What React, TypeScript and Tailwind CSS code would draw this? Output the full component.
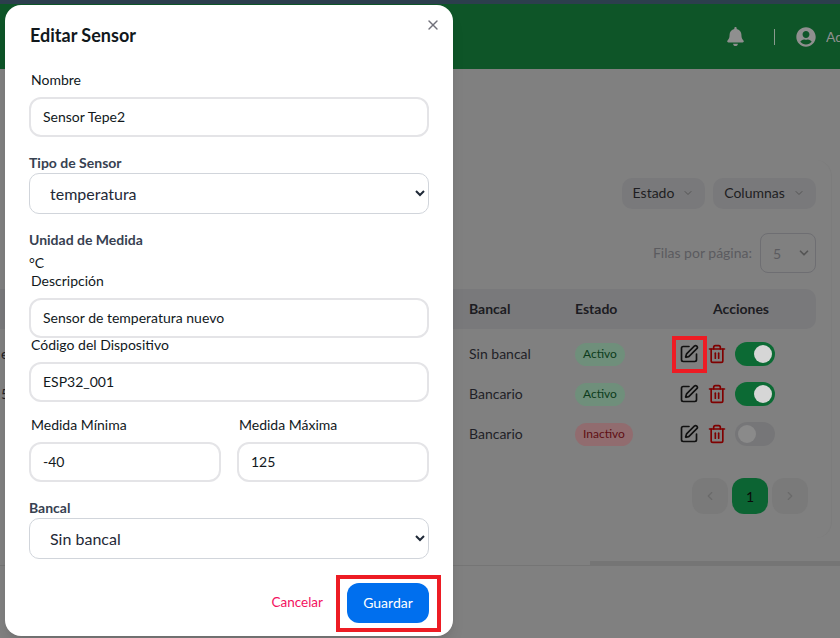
import { SquarePen, Trash2, ChevronDown, ChevronLeft, ChevronRight, X } from "lucide-react";
import { FaBell, FaUserCircle } from "react-icons/fa";

const rows = [
  { cut: "e", bancal: "Sin bancal", on: true },
  { cut: "5", bancal: "Bancario", on: true },
  { cut: "", bancal: "Bancario", on: false },
];

function TextField({ value, className = "" }: { value: string; className?: string }) {
  return (
    <input
      readOnly
      defaultValue={value}
      className={`block h-[40px] w-full rounded-[12px] border-2 border-[#e4e4e7] bg-white px-3 pb-[2px] text-[14px] text-[#11181c] outline-none ${className}`}
    />
  );
}

function NativeSelect({ value }: { value: string }) {
  return (
    <select
      defaultValue={value}
      className="block h-[41px] w-full rounded-[10px] border border-[#d1d5db] bg-white px-4 text-[16px] text-[#1f2937] outline-none"
    >
      <option>{value}</option>
    </select>
  );
}

function Switch({ on }: { on: boolean }) {
  return (
    <div className={`flex h-[24px] w-[40px] items-center rounded-full px-[3px] ${on ? "justify-end bg-[#0c6a34]" : "justify-start bg-[#767678]"}`}>
      <div className={`h-[18px] w-[18px] rounded-full ${on ? "bg-[#d6d6d6]" : "bg-[#8a8a8a]"}`} />
    </div>
  );
}

export default function App() {
  return (
    <div className="relative flex h-[638px] w-[840px] flex-col overflow-hidden bg-[#808080] font-['Lato',sans-serif]">
      <div className="h-[4px] bg-[#2c3e4d]" />
      <header className="flex h-[65px] items-center justify-end bg-[#0e5528] text-[#8f8f8f]">
        <FaBell className="mr-[29px] text-[19px]" />
        <div className="mr-[21px] h-[16px] w-px bg-[#8a9a8f]" />
        <FaUserCircle className="mr-[10px] text-[20px]" />
        <span className="w-[14px] overflow-hidden text-[14px]">Admin</span>
      </header>

      <main className="flex-1">
        <section className="mt-[91px] mr-[8px] h-[378px] rounded-r-[16px] border-r border-[#7c7c7c] pt-[18px] pr-[15px]">
          <div className="flex h-[31px] justify-end gap-2">
            <div className="flex w-[83px] items-center justify-center gap-2 rounded-[10px] bg-[#79797b] pb-[2px] text-[14px] text-[#1e1e22]">
              Estado <ChevronDown size={12} className="text-[#555]" />
            </div>
            <div className="flex w-[103px] items-center justify-center gap-2 rounded-[10px] bg-[#79797b] pb-[2px] text-[14px] text-[#1e1e22]">
              Columnas <ChevronDown size={12} className="text-[#555]" />
            </div>
          </div>

          <div className="mt-[24px] flex h-[40px] items-center justify-end gap-2">
            <span className="pb-[2px] text-[14px] text-[#5b5b5f]">Filas por página:</span>
            <div className="flex h-[40px] w-[56px] items-center justify-between rounded-[8px] border border-[#6e6e72] pr-[4px] pl-[12px] text-[14px] text-[#5b5b5f]">
              5 <ChevronDown size={14} strokeWidth={3} className="text-[#555]" />
            </div>
          </div>

          <div className="mt-[16px] flex h-[40px] items-center rounded-r-[10px] bg-[#79797b] pb-[2px] text-[14px] font-bold text-[#1c1c22]">
            <span className="ml-[469px] w-[106px]">Bancal</span>
            <span className="w-[138px]">Estado</span>
            <span>Acciones</span>
          </div>

          <div className="mt-[5px] flex flex-col">
            {rows.map((r, i) => (
              <div key={i} className="flex h-[40px] items-center text-[14px] text-[#1f1f27]">
                <span className="w-[469px] pb-[2px] pl-[1px]">{r.cut}</span>
                <span className="w-[106px] pb-[2px]">{r.bancal}</span>
                <span className="w-[104px]">
                  <span className={`inline-flex h-[23px] items-center rounded-full px-[8px] text-[12px] ${r.on ? "bg-[#6f8f7b] text-[#0d3c1c]" : "bg-[#916c6f] text-[#5f0f14]"}`}>
                    {r.on ? "Activo" : "Inactivo"}
                  </span>
                </span>
                <SquarePen size={20} strokeWidth={2} className="text-[#111]" />
                <Trash2 size={20} strokeWidth={2} className="ml-[8px] text-[#7f0000]" />
                <div className="ml-[8px]"><Switch on={r.on} /></div>
              </div>
            ))}
          </div>

          <div className="mt-[24px] mr-[8px] flex justify-end gap-1">
            <div className="flex h-[36px] w-[36px] items-center justify-center rounded-[12px] bg-[#7a7a7a] text-[#6a6a6a]"><ChevronLeft size={14} /></div>
            <div className="flex h-[36px] w-[36px] items-center justify-center rounded-[12px] bg-[#0c6433] text-[14px] text-[#0a0a0a]">1</div>
            <div className="flex h-[36px] w-[36px] items-center justify-center rounded-[12px] bg-[#7a7a7a] text-[#6a6a6a]"><ChevronRight size={14} /></div>
          </div>
        </section>
        <div className="mt-[23px] flex h-[5px] items-end">
          <div className="h-px w-[590px] bg-[#757575]" />
          <div className="h-[5px] flex-1 bg-[#757575]" />
        </div>
      </main>

      {/* annotation around the edit icon of the first row */}
      <div className="absolute top-[336px] left-[672px] h-[37px] w-[35px] border-[4px] border-[#ed1c24]" />

      {/* modal */}
      <div className="absolute top-[5px] left-[5px] h-[631px] w-[448px] rounded-[16px] bg-white px-[24px] text-[#11181c] shadow-lg">
        <button className="absolute top-[12px] right-[12px] text-[#71717a]"><X size={16} /></button>
        <h2 className="mt-[16px] ml-[1px] text-[18px] leading-[28px] font-bold">Editar Sensor</h2>

        <label className="mt-[21px] ml-[2px] block text-[14px] leading-[20px]">Nombre</label>
        <TextField value="Sensor Tepe2" className="mt-[7px]" />

        <label className="mt-[16px] block text-[14px] leading-[20px] font-bold text-[#374151]">Tipo de Sensor</label>
        <NativeSelect value="temperatura" />

        <label className="mt-[16px] block text-[14px] leading-[20px] font-bold text-[#374151]">Unidad de Medida</label>
        <p className="mt-[3px] text-[14px] leading-[20px]">°C</p>
        <label className="-mt-[2px] ml-[2px] block text-[14px] leading-[20px]">Descripción</label>
        <TextField value="Sensor de temperatura nuevo" className="mt-[7px]" />

        <label className="mt-[-3px] ml-[2px] block text-[14px] leading-[20px]">Código del Dispositivo</label>
        <TextField value="ESP32_001" className="mt-[7px]" />

        <div className="mt-[13px] flex gap-4">
          <div className="flex-1">
            <label className="ml-[2px] block text-[14px] leading-[20px]">Medida Mínima</label>
            <TextField value="-40" className="mt-[7px]" />
          </div>
          <div className="flex-1">
            <label className="ml-[2px] block text-[14px] leading-[20px]">Medida Máxima</label>
            <TextField value="125" className="mt-[7px]" />
          </div>
        </div>

        <label className="mt-[16px] block text-[14px] leading-[20px] font-bold text-[#374151]">Bancal</label>
        <NativeSelect value="Sin bancal" />

        <div className="mt-[24px] flex items-center justify-end gap-6">
          <button className="pb-[2px] text-[13.5px] text-[#f31260]">Cancelar</button>
          <button className="h-[40px] w-[82px] rounded-[12px] bg-[#006fee] pb-[2px] text-[14px] text-white">Guardar</button>
        </div>
      </div>

      {/* annotation around the save button */}
      <div className="absolute top-[575px] left-[336px] h-[57px] w-[105px] border-[4px] border-[#ed1c24]" />
    </div>
  );
}
